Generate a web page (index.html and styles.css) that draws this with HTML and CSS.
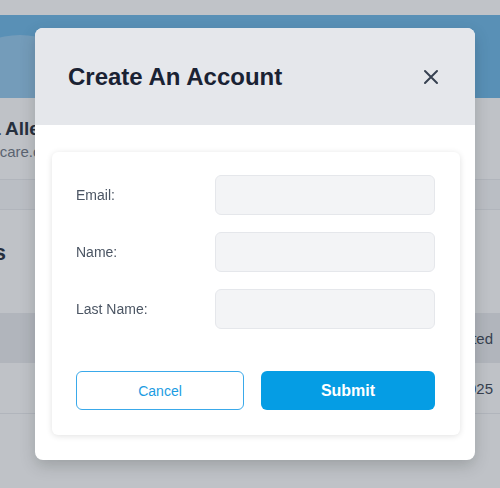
FILE: index.html
```html
<!DOCTYPE html>
<html lang="en">
<head>
<meta charset="UTF-8">
<meta name="viewport" content="width=device-width, initial-scale=1.0">
<title>Create An Account</title>
<link rel="stylesheet" href="styles.css">
</head>
<body>

<div class="page">
    <div class="topbar"></div>
    <div class="banner">
        <div class="banner-circle"></div>
    </div>
    <div class="profile">
        <div class="profile-name">Dana Allen</div>
        <div class="profile-mail">allencare.com</div>
    </div>
    <div class="tabs"></div>
    <div class="section-title">Records</div>
    <div class="table-head"><span></span><span>Updated</span></div>
    <div class="table-row"><span></span><span>12/02/2025</span></div>
</div>

<div class="overlay">
    <div class="modal">
        <div class="modal-header">
            <h2>Create An Account</h2>
            <button class="close-btn" aria-label="Close">
                <svg width="16" height="16" viewBox="0 0 16 16">
                    <path d="M2 2 L14 14 M14 2 L2 14" stroke="#374151" stroke-width="2" stroke-linecap="round"/>
                </svg>
            </button>
        </div>
        <div class="modal-body">
            <form class="card">
                <div class="form-row">
                    <label>Email:</label>
                    <input type="text">
                </div>
                <div class="form-row">
                    <label>Name:</label>
                    <input type="text">
                </div>
                <div class="form-row">
                    <label>Last Name:</label>
                    <input type="text">
                </div>
                <div class="form-actions">
                    <button type="button" class="btn btn-cancel">Cancel</button>
                    <button type="button" class="btn btn-submit">Submit</button>
                </div>
            </form>
        </div>
    </div>
</div>

</body>
</html>
```

FILE: styles.css
```css
body {
    font-family: "Liberation Sans", Arial, sans-serif;
    margin: 0;
    padding: 0;
    background-color: #f9fafb;
    overflow: hidden;
}
.page {
    height: 488px;
}
.topbar {
    height: 15px;
    background-color: #fbfbfd;
}
.banner {
    height: 83px;
    background-color: #67b2e3;
    overflow: hidden;
}
.banner-circle {
    width: 160px;
    height: 160px;
    margin: 20px 0 0 -60px;
    border-radius: 50%;
    background-color: #8ec3e8;
}
.profile {
    height: 82px;
    padding-top: 20px;
    box-sizing: border-box;
    background-color: #f9fafb;
    border-bottom: 1px solid #e5e7eb;
}
.profile-name {
    font-size: 19px;
    font-weight: bold;
    color: #1f2937;
    margin-left: -46px;
}
.profile-mail {
    font-size: 15px;
    color: #6b7280;
    margin-top: 3px;
    margin-left: -32px;
}
.tabs {
    height: 29px;
    border-bottom: 1px solid #e5e7eb;
    background-color: #f3f4f6;
}
.section-title {
    height: 103px;
    line-height: 86px;
    font-size: 22px;
    font-weight: bold;
    color: #1f2937;
    margin-left: -82px;
}
.table-head,
.table-row {
    display: flex;
    justify-content: space-between;
    align-items: center;
    height: 50px;
    padding-right: 7px;
    font-size: 15px;
    color: #374151;
}
.table-head {
    background-color: #e5e7eb;
}
.table-row {
    border-bottom: 1px solid #e5e7eb;
}

.overlay {
    position: fixed;
    inset: 0;
    background-color: rgba(55, 65, 81, 0.3);
    padding: 28px 0 0 35px;
}
.modal {
    width: 440px;
    background-color: #fff;
    border-radius: 8px;
    overflow: hidden;
    box-shadow: 0 6px 16px rgba(0, 0, 0, 0.18);
}
.modal-header {
    display: flex;
    justify-content: space-between;
    align-items: center;
    height: 97px;
    padding: 0 36px 0 33px;
    background-color: #e5e7eb;
}
.modal-header h2 {
    margin: 0;
    font-size: 24px;
    font-weight: bold;
    color: #1a2233;
}
.close-btn {
    border: none;
    background: none;
    padding: 0;
    display: flex;
    cursor: pointer;
}
.modal-body {
    padding: 27px 15px 25px 17px;
}
.card {
    background-color: #fff;
    border-radius: 6px;
    box-shadow: 0 1px 6px rgba(0, 0, 0, 0.12);
    padding: 23px 25px 25px 24px;
    display: flex;
    flex-direction: column;
    gap: 17px;
}
.form-row {
    display: grid;
    grid-template-columns: 139px 1fr;
    align-items: center;
}
.form-row label {
    font-size: 14px;
    color: #4b5563;
}
.form-row input {
    height: 40px;
    box-sizing: border-box;
    background-color: #f3f4f6;
    border: 1px solid #e5e7eb;
    border-radius: 6px;
}
.form-actions {
    display: grid;
    grid-template-columns: 168px 1fr;
    gap: 17px;
    margin-top: 25px;
}
.btn {
    height: 39px;
    border-radius: 6px;
    font-family: "Liberation Sans", Arial, sans-serif;
    cursor: pointer;
}
.btn-cancel {
    background-color: #fff;
    border: 1.5px solid #3aa9ea;
    color: #1b9ce2;
    font-size: 14px;
}
.btn-submit {
    background-color: #059de4;
    border: none;
    color: #fff;
    font-size: 16px;
    font-weight: bold;
}
```
